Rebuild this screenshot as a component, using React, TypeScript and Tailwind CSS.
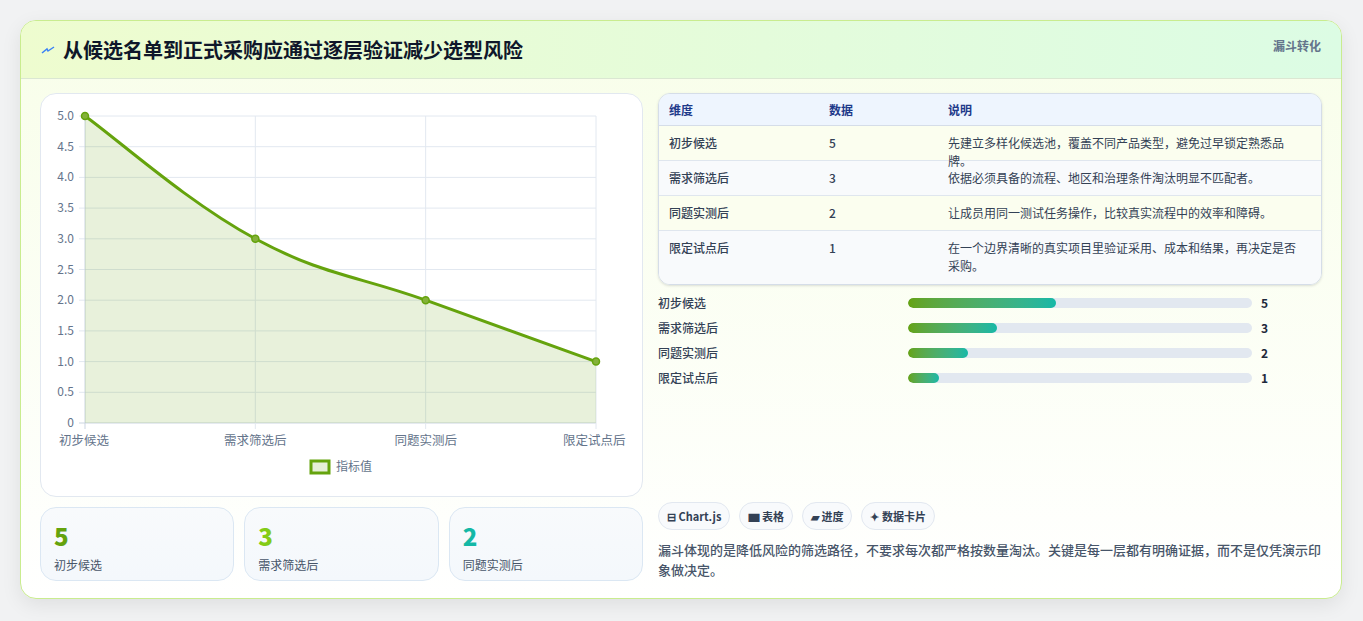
const rows = [
  { name: '初步候选', value: 5, desc: '先建立多样化候选池，覆盖不同产品类型，避免过早锁定熟悉品牌。', bar: 43 },
  { name: '需求筛选后', value: 3, desc: '依据必须具备的流程、地区和治理条件淘汰明显不匹配者。', bar: 26 },
  { name: '同题实测后', value: 2, desc: '让成员用同一测试任务操作，比较真实流程中的效率和障碍。', bar: 17.5 },
  { name: '限定试点后', value: 1, desc: '在一个边界清晰的真实项目里验证采用、成本和结果，再决定是否采购。', bar: 9 },
];

const font = { fontFamily: '"Noto Sans CJK SC", "Noto Sans", sans-serif' };

function LineChart() {
  const x0 = 44, x1 = 555, y0 = 329, y1 = 22;
  const px = (i: number) => x0 + ((x1 - x0) / 3) * i;
  const py = (v: number) => y0 - ((y0 - y1) / 5) * v;
  const pts = rows.map((r, i) => [px(i), py(r.value)]);
  let d = `M${pts[0][0]},${pts[0][1]}`;
  for (let i = 0; i < pts.length - 1; i++) {
    const p0 = pts[i - 1] || pts[i], p1 = pts[i], p2 = pts[i + 1], p3 = pts[i + 2] || p2;
    const t = 0.2;
    const c1 = [p1[0] + (p2[0] - p0[0]) * t, p1[1] + (p2[1] - p0[1]) * t];
    const c2 = [p2[0] - (p3[0] - p1[0]) * t, p2[1] - (p3[1] - p1[1]) * t];
    d += ` C${c1[0]},${c1[1]} ${c2[0]},${c2[1]} ${p2[0]},${p2[1]}`;
  }
  const ticks = [0, 0.5, 1, 1.5, 2, 2.5, 3, 3.5, 4, 4.5, 5];
  return (
    <svg width="602" height="403" viewBox="0 0 602 403" style={font}>
      {ticks.map((t) => (
        <g key={t}>
          <line x1={x0 - 6} x2={x1} y1={py(t)} y2={py(t)} stroke={t === 0 ? '#cbd5e1' : '#e2e8f0'} />
          <text x={33} y={py(t) + 4} textAnchor="end" fontSize="12" fill="#64748b">{t === 0 ? '0' : t.toFixed(1)}</text>
        </g>
      ))}
      {[0, 1, 2, 3].map((i) => (
        <line key={i} x1={px(i)} x2={px(i)} y1={y1} y2={y0 + 6} stroke={i === 0 ? '#cbd5e1' : '#e2e8f0'} />
      ))}
      <path d={`${d} L${x1},${y0} L${x0},${y0} Z`} fill="#65a30d" fillOpacity="0.15" />
      <path d={d} fill="none" stroke="#65a30d" strokeWidth="3" />
      {pts.map((p, i) => (
        <circle key={i} cx={p[0]} cy={p[1]} r="3.5" fill="#84b13a" stroke="#65a30d" strokeWidth="1.5" />
      ))}
      {rows.map((r, i) => (
        <text key={r.name} x={i === 0 ? px(i) - 26 : i === 3 ? px(i) - 33 : px(i)} y={351} textAnchor={i === 0 || i === 3 ? 'start' : 'middle'} fontSize="12.5" fill="#64748b">{r.name}</text>
      ))}
      <rect x={270} y={367} width={18} height={12} fill="#e6efd8" stroke="#65a30d" strokeWidth="3" />
      <text x={295} y={377} fontSize="12" fill="#64748b">指标值</text>
    </svg>
  );
}

export default function App() {
  const stats = [
    { v: 5, label: '初步候选', color: 'text-[#65a30d]' },
    { v: 3, label: '需求筛选后', color: 'text-[#84cc16]' },
    { v: 2, label: '同题实测后', color: 'text-[#14b8a6]' },
  ];
  return (
    <div className="w-[1363px] h-[621px] bg-[#f1f2f3] pt-5 pl-5" style={font}>
      <div className="w-[1322px] h-[579px] rounded-2xl border border-[#c9ec8f] bg-gradient-to-b from-[#f8fee9] to-white overflow-hidden shadow-[0_6px_20px_rgba(0,0,0,0.08)]">
        <div className="h-[58px] bg-gradient-to-r from-[#eefccf] to-[#dcfce4] border-b border-[#dbe7d3] flex items-start justify-between px-5">
          <div className="flex items-center gap-2 mt-[14px]">
            <svg width="14" height="10" viewBox="0 0 14 10"><path d="M1 8 L6 4 L7 6 L13 2" fill="none" stroke="#3b82f6" strokeWidth="1.5" /></svg>
            <h1 className="text-[20px] font-bold text-[#0f172a]">从候选名单到正式采购应通过逐层验证减少选型风险</h1>
          </div>
          <span className="text-[12px] font-bold text-[#64748b] mt-[16px]">漏斗转化</span>
        </div>
        <div className="flex gap-[15px] px-[19px] pt-[14px]">
          <div className="w-[603px] flex flex-col gap-[10px]">
            <div className="h-[404px] rounded-2xl border border-[#e2e8f0] bg-white overflow-hidden">
              <LineChart />
            </div>
            <div className="grid grid-cols-3 gap-[10px]">
              {stats.map((s) => (
                <div key={s.label} className="h-[74px] rounded-2xl border border-[#dbe7f3] bg-gradient-to-b from-[#f8fafc] to-[#f4f8fc] px-[13px] pt-[12px]">
                  <div className={`text-[24px] font-extrabold leading-8 ${s.color}`}>{s.v}</div>
                  <div className="text-[12px] text-[#475569] mt-[4px]">{s.label}</div>
                </div>
              ))}
            </div>
          </div>
          <div className="w-[667px] flex flex-col">
            <div className="rounded-xl border border-[#d5dde8] overflow-hidden shadow-sm">
              <div className="flex h-[32px] items-center bg-[#eef5fe] border-b border-[#d5dde8] text-[12px] font-bold text-[#1e3a8a]">
                <div className="w-[170px] pl-[10px]">维度</div>
                <div className="w-[119px]">数据</div>
                <div className="flex-1">说明</div>
              </div>
              {rows.map((r, i) => (
                <div key={r.name} className={`flex items-start text-[12px] text-[#334155] border-b last:border-b-0 border-[#dfe6ee] ${i % 2 === 0 ? 'bg-[#fbfeef]' : 'bg-[#f8fafc]'} ${i === 3 ? 'h-[53px] pt-[8px]' : 'h-[35px] pt-[8px]'}`}>
                  <div className="w-[170px] pl-[10px] font-medium">{r.name}</div>
                  <div className="w-[119px] font-medium">{r.value}</div>
                  <div className="flex-1 pr-5 leading-[18px]">{r.desc}</div>
                </div>
              ))}
            </div>
            <div className="flex flex-col gap-[9px] mt-[10px]">
              {rows.map((r) => (
                <div key={r.name} className="flex items-center h-[16px] text-[12px]">
                  <div className="w-[250px] text-[#334155] font-medium">{r.name}</div>
                  <div className="w-[344px] h-[10px] rounded-full bg-[#e2e8f0] overflow-hidden">
                    <div className="h-full rounded-full bg-gradient-to-r from-[#65a30d] to-[#14b8a6]" style={{ width: `${r.bar}%` }} />
                  </div>
                  <div className="ml-[9px] font-bold text-[#1e293b]">{r.value}</div>
                </div>
              ))}
            </div>
            <div className="flex gap-[9px] mt-[116px]">
              {['⊟ Chart.js', '▆ 表格', '▰ 进度', '✦ 数据卡片'].map((c) => (
                <span key={c} className="h-[28px] px-[8px] flex items-center rounded-full border border-[#e2e8f0] bg-[#f8fafc] text-[11px] font-bold text-[#334155]">{c}</span>
              ))}
            </div>
            <p className="mt-[10px] text-[13px] leading-[20px] text-[#475569] font-medium">漏斗体现的是降低风险的筛选路径，不要求每次都严格按数量淘汰。关键是每一层都有明确证据，而不是仅凭演示印象做决定。</p>
          </div>
        </div>
      </div>
    </div>
  );
}
